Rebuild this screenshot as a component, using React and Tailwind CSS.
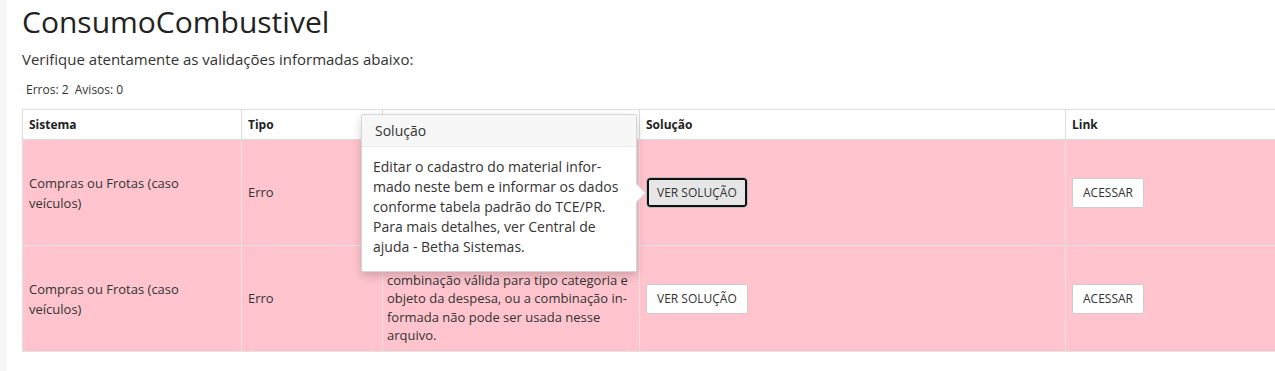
import React from "react";

const rows = [
  {
    id: 1,
    sistema: "Compras ou Frotas (caso veículos)",
    tipo: "Erro",
    descricao:
      "O material informado não possui uma combinação válida para tipo categoria e objeto da despesa, ou a combinação in\u00ADformada não pode ser usada nesse arquivo.",
    focused: true,
  },
  {
    id: 2,
    sistema: "Compras ou Frotas (caso veículos)",
    tipo: "Erro",
    descricao:
      "O material informado não possui uma combinação válida para tipo categoria e objeto da despesa, ou a combinação in\u00ADformada não pode ser usada nesse arquivo.",
    focused: false,
  },
];

const Popover = () => (
  <div className="absolute left-[339px] top-[5px] w-[276px] bg-white border border-[#d6d6d6] rounded-[2px] shadow-[0_4px_10px_rgba(0,0,0,0.18)] z-10">
    <div className="bg-[#f7f7f7] border-b border-[#ebebeb] px-[13px] h-[32px] flex items-center text-[14px] text-[#333]">
      Solução
    </div>
    <div className="px-[11px] pt-[10px] pb-[14px] text-[14px] leading-[20px] text-[#333]">
      Editar o cadastro do material infor&shy;mado neste bem e informar os dados conforme tabela padrão do TCE/PR. Para mais detalhes, ver Central de ajuda - Betha Sistemas.
    </div>
    {/* seta */}
    <div className="absolute right-[-10px] top-[68px] w-0 h-0 border-y-[10px] border-y-transparent border-l-[10px] border-l-[#d6d6d6]" />
    <div className="absolute right-[-9px] top-[69px] w-0 h-0 border-y-[9px] border-y-transparent border-l-[9px] border-l-white" />
  </div>
);

const Validacoes = () => {
  return (
    <div
      className="flex w-[1275px] h-[371px] overflow-hidden bg-white text-[#333]"
      style={{ fontFamily: "'Open Sans', 'Liberation Sans', sans-serif" }}
    >
      <div className="w-[7px] shrink-0 bg-[#f7f7f7]" />
      <div className="pl-[15px] flex-1 min-w-0">
        <h1 className="text-[30px] leading-[36px] mt-[4px] font-normal text-[#222]">ConsumoCombustivel</h1>
        <p className="text-[15px] leading-[20px] mt-[9px]">Verifique atentamente as validações informadas abaixo:</p>
        <div className="text-[12px] leading-[16px] mt-[13px] pl-[4px]">Erros: 2&nbsp; Avisos: 0</div>

        <div className="relative mt-[11px]">
          <table className="table-fixed border-collapse w-[1300px] text-[13px]">
            <colgroup>
              <col className="w-[219px]" />
              <col className="w-[141px]" />
              <col className="w-[257px]" />
              <col className="w-[426px]" />
              <col />
            </colgroup>
            <thead>
              <tr className="h-[30px]">
                {["Sistema", "Tipo", "Descrição", "Solução", "Link"].map((h) => (
                  <th key={h} className="border border-[#ddd] text-left font-bold text-[12px] px-[6px] py-0 text-[#222]">
                    {h}
                  </th>
                ))}
              </tr>
            </thead>
            <tbody>
              {rows.map((r) => (
                <tr key={r.id} className="bg-[#ffc4cd] h-[106px]">
                  <td className="border border-[#e8dfe0] pl-[6px] pr-[24px] leading-[20px] align-middle">{r.sistema}</td>
                  <td className="border border-[#e8dfe0] px-[6px] align-middle">{r.tipo}</td>
                  <td className="border border-[#e8dfe0] pl-[4px] pr-[2px] py-[6px] leading-[18.5px] align-middle">{r.descricao}</td>
                  <td className="border border-[#e8dfe0] px-[6px] align-middle">
                    {r.focused ? (
                      <button className="h-[29px] ml-[1px] px-[8px] text-[12px] bg-[#e6e6e6] border-[2px] border-[#111] rounded-[3px] outline outline-1 outline-[#bbb]">
                        VER SOLUÇÃO
                      </button>
                    ) : (
                      <button className="h-[30px] px-[10px] text-[12px] bg-white border border-[#ccc] rounded-[2px]">
                        VER SOLUÇÃO
                      </button>
                    )}
                  </td>
                  <td className="border border-[#e8dfe0] px-[6px] align-middle">
                    <button className="h-[30px] px-[10px] text-[12px] bg-white border border-[#ccc] rounded-[2px]">
                      ACESSAR
                    </button>
                  </td>
                </tr>
              ))}
            </tbody>
          </table>
          <Popover />
        </div>
      </div>
    </div>
  );
};

export default function App() {
  return <Validacoes />;
}
